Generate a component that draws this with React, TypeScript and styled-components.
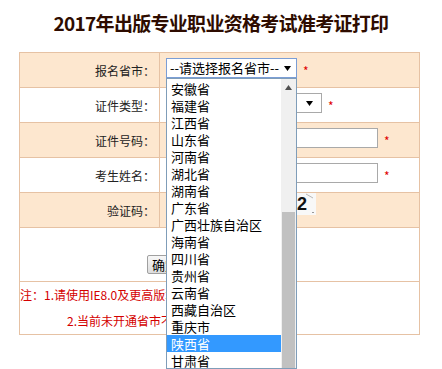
import React from 'react';
import styled, { createGlobalStyle } from 'styled-components';

const GlobalStyle = createGlobalStyle`
  html, body {
    margin: 0;
    padding: 0;
    background: #fff;
    overflow: hidden;
  }
  body {
    font-family: "Noto Sans CJK SC", "Liberation Sans", sans-serif;
  }
`;

const line = '#e6c2a4';
const peach = '#fde7cf';

const Page = styled.div`
  width: 442px;
  height: 369px;
  overflow: hidden;
`;

const Title = styled.h1`
  margin: 8px 0 14px;
  font-size: 19px;
  line-height: 30px;
  letter-spacing: -0.7px;
  font-weight: bold;
  text-align: center;
  color: #2e0c00;
`;

const Form = styled.div`
  box-sizing: border-box;
  width: 401px;
  margin-left: 19px;
  border: 1px solid ${line};
`;

const Row = styled.div<{ $tint?: boolean; $height?: number; $full?: boolean }>`
  display: grid;
  grid-template-columns: ${p => (p.$full ? '1fr' : '139px 1fr')};
  height: ${p => p.$height ?? 34}px;
  background: ${p => (p.$tint ? peach : '#fff')};
  & + & {
    border-top: 1px solid ${line};
  }
`;

const Label = styled.div`
  display: flex;
  align-items: center;
  justify-content: flex-end;
  padding-right: 4px;
  font-size: 12px;
  color: #222;
`;

const Field = styled.div<{ $top?: number }>`
  display: flex;
  align-items: flex-start;
  padding: ${p => p.$top ?? 5}px 0 0 6px;
  border-left: 1px solid ${line};
`;

const SelectWrap = styled.div`
  position: relative;
`;

const SelectBox = styled.div<{ $width: number; $focus?: boolean; $arrowGap?: number }>`
  box-sizing: border-box;
  width: ${p => p.$width}px;
  height: 20px;
  display: flex;
  align-items: center;
  justify-content: space-between;
  padding: 0 ${p => p.$arrowGap ?? 5}px 0 3px;
  border: 1px solid ${p => (p.$focus ? '#7b9ed6' : '#a9a9a9')};
  background: #fff;
  font-size: 13px;
  line-height: 18px;
  color: #000;
  white-space: nowrap;
`;

const DropList = styled.div`
  position: absolute;
  top: 20px;
  left: 0;
  z-index: 10;
  box-sizing: border-box;
  width: 131px;
  height: 291px;
  display: flex;
  border: 1px solid #7f9db9;
  background: #fff;
  overflow: hidden;
`;

const Options = styled.ul`
  flex: 1;
  margin: 0;
  padding: 1px 0 0;
  list-style: none;
`;

const Option = styled.li<{ $active?: boolean }>`
  height: 17px;
  padding-left: 4px;
  font-size: 13px;
  line-height: 17px;
  white-space: nowrap;
  overflow: hidden;
  background: ${p => (p.$active ? '#3399ff' : 'transparent')};
  color: ${p => (p.$active ? '#fff' : '#000')};
`;

const ScrollTrack = styled.div`
  width: 15px;
  display: flex;
  flex-direction: column;
  align-items: center;
  background: #f0f0f0;
`;

const ScrollArrow = styled.div`
  height: 17px;
  display: flex;
  align-items: center;
  justify-content: center;
`;

const ScrollThumb = styled.div`
  flex: 1;
  width: 13px;
  margin-top: 116px;
  background: #c1c1c1;
`;

const Required = styled.span`
  margin-left: 6px;
  padding-top: 3px;
  font-size: 12px;
  line-height: 20px;
  color: #e00000;
`;

const TextInput = styled.input<{ $width: number }>`
  box-sizing: border-box;
  width: ${p => p.$width}px;
  height: 20px;
  margin: 0;
  padding: 0 3px;
  border: 1px solid #a9a9a9;
  background: #fff;
  font-size: 12px;
  outline: none;
`;

const CaptchaInput = styled(TextInput)`
  margin-top: 6px;
`;

const Captcha = styled.div`
  position: relative;
  box-sizing: border-box;
  width: 60px;
  height: 22px;
  margin-left: 10px;
  display: flex;
  align-items: center;
  justify-content: flex-end;
  padding-right: 9px;
  background: #f8f8f8;
  font: bold 18px "Liberation Sans", sans-serif;
  color: #111;
`;

const Noise = styled.svg`
  position: absolute;
  inset: 0;
`;

const ActionCell = styled.div`
  display: flex;
  align-items: flex-start;
  padding: 27px 0 0 127px;
`;

const Button = styled.button`
  height: 19px;
  margin: 0;
  padding: 0 4px;
  border: 1px solid #a0a0a0;
  border-radius: 2px;
  background: linear-gradient(#f7f7f7, #dddddd);
  font-family: inherit;
  font-size: 13px;
  line-height: 17px;
  color: #000;
`;

const Notes = styled.div`
  color: #d40000;
  font-size: 12px;
  line-height: 26px;
`;

const NoteLine = styled.p<{ $indent: number }>`
  margin: 0;
  padding-left: ${p => p.$indent}px;
  white-space: nowrap;
`;

const Arrow: React.FC<{ up?: boolean; color?: string }> = ({ up, color = '#000' }) => (
  <svg width="7" height="5" viewBox="0 0 7 5">
    <polygon points={up ? '0,5 7,5 3.5,0' : '0,0 7,0 3.5,5'} fill={color} />
  </svg>
);

const provinces = [
  '安徽省', '福建省', '江西省', '山东省', '河南省', '湖北省', '湖南省', '广东省',
  '广西壮族自治区', '海南省', '四川省', '贵州省', '云南省', '西藏自治区', '重庆市',
  '陕西省', '甘肃省', '青海省', '宁夏回族自治区',
];

const App: React.FC = () => {
  return (
    <Page>
      <GlobalStyle />
      <Title>2017年出版专业职业资格考试准考证打印</Title>
      <Form>
        <Row $tint>
          <Label>报名省市：</Label>
          <Field>
            <SelectWrap>
              <SelectBox $width={131} $focus>
                <span>--请选择报名省市--</span>
                <Arrow />
              </SelectBox>
              <DropList>
                <Options>
                  {provinces.map(name => (
                    <Option key={name} $active={name === '陕西省'}>{name}</Option>
                  ))}
                </Options>
                <ScrollTrack>
                  <ScrollArrow>
                    <Arrow up color="#505050" />
                  </ScrollArrow>
                  <ScrollThumb />
                </ScrollTrack>
              </DropList>
            </SelectWrap>
            <Required>*</Required>
          </Field>
        </Row>
        <Row>
          <Label>证件类型：</Label>
          <Field>
            <SelectBox $width={156} $arrowGap={8}>
              <span>身份证</span>
              <Arrow />
            </SelectBox>
            <Required>*</Required>
          </Field>
        </Row>
        <Row $tint>
          <Label>证件号码：</Label>
          <Field>
            <TextInput $width={212} readOnly />
            <Required>*</Required>
          </Field>
        </Row>
        <Row>
          <Label>考生姓名：</Label>
          <Field>
            <TextInput $width={212} readOnly />
            <Required>*</Required>
          </Field>
        </Row>
        <Row $tint>
          <Label>验证码：</Label>
          <Field $top={0}>
            <CaptchaInput $width={80} readOnly />
            <Captcha>
              4952
              <Noise width="60" height="22" viewBox="0 0 60 22">
                <line x1="50" y1="1" x2="57" y2="5" stroke="#b8b8b8" strokeWidth="1" />
                <rect x="56" y="19" width="2" height="1" fill="#999" />
              </Noise>
            </Captcha>
          </Field>
        </Row>
        <Row $full $height={53}>
          <ActionCell>
            <Button type="button">确定打印</Button>
          </ActionCell>
        </Row>
        <Row $full $height={52}>
          <Notes>
            <NoteLine $indent={0}>注：1.请使用IE8.0及更高版本浏览器打印；</NoteLine>
            <NoteLine $indent={47}>2.当前未开通省市不能打印。</NoteLine>
          </Notes>
        </Row>
      </Form>
    </Page>
  );
};

export default App;
